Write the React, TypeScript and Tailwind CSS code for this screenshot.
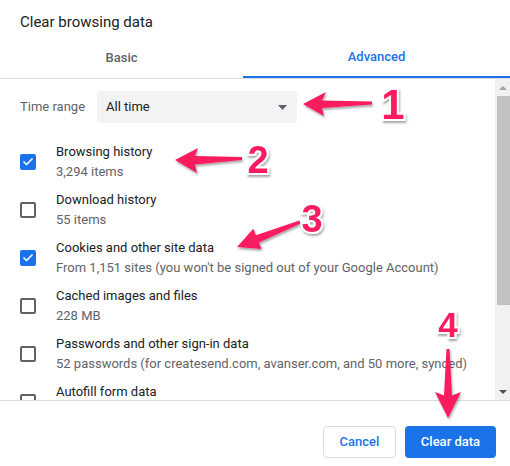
import { Check } from 'lucide-react';

const rows = [
  { label: 'Browsing history', sub: '3,294 items', checked: true },
  { label: 'Download history', sub: '55 items', checked: false },
  { label: 'Cookies and other site data', sub: "From 1,151 sites (you won't be signed out of your Google Account)", checked: true },
  { label: 'Cached images and files', sub: '228 MB', checked: false },
  { label: 'Passwords and other sign-in data', sub: '52 passwords (for createsend.com, avanser.com, and 50 more, synced)', checked: false },
  { label: 'Autofill form data', sub: '\u00a0', checked: false },
];

function Box({ checked }: { checked: boolean }) {
  if (checked) {
    return (
      <div className="w-4 h-4 shrink-0 rounded-[2px] bg-[#1a73e8] flex items-center justify-center">
        <Check className="w-3 h-3 text-white" strokeWidth={3.5} />
      </div>
    );
  }
  return <div className="w-4 h-4 shrink-0 rounded-[2px] border-2 border-[#5f6368]" />;
}

// pink callout arrows + numbers drawn over the dialog
function Callouts() {
  const pink = '#fb1a60';
  const num = {
    fill: pink,
    stroke: '#ffffff',
    strokeWidth: 4,
    paintOrder: 'stroke' as const,
    fontFamily: '"Liberation Sans", Arial, sans-serif',
    fontWeight: 700,
    textAnchor: 'middle' as const,
    filter: 'url(#sh)',
  };
  return (
    <svg className="absolute inset-0 pointer-events-none" width="510" height="466" viewBox="0 0 510 466">
      <defs>
        <filter id="sh" x="-20%" y="-20%" width="140%" height="140%">
          <feDropShadow dx="1" dy="2" stdDeviation="1.2" floodColor="#000" floodOpacity="0.35" />
        </filter>
      </defs>
      <g fill={pink} filter="url(#sh)">
        <polygon points="303,104 326,92 322,100.5 372,101.5 372,104.5 322,108 324,116" />
        <polygon points="175,160 198,148 195,156 242,157 242,160 195,164.5 197,173" />
        <polygon points="237,247 261.5,249.1 258.9,242.6 300.6,223.4 299.4,220.6 255.9,235.2 253.3,228.7" />
        <polygon points="448,418 461,392 452,395.5 449.5,349 446.5,349 444,395.5 435,392" />
      </g>
      <text x="393" y="119" fontSize="42" {...num}>1</text>
      <text x="258" y="173" fontSize="38" {...num}>2</text>
      <text x="312" y="232" fontSize="38" {...num}>3</text>
      <text x="448" y="337" fontSize="35" {...num}>4</text>
    </svg>
  );
}

export default function App() {
  return (
    <div className="relative w-[510px] h-[466px] bg-white overflow-hidden font-['Roboto',_'Liberation_Sans',_sans-serif] flex flex-col">
      <div className="h-[40px] pl-5 pt-[12px] text-[15px] leading-[20px] text-[#202124]">Clear browsing data</div>

      <div className="grid grid-cols-[243px_1fr] h-[39px] border-b border-[#dadce0]">
        <div className="flex items-center justify-center pb-[3px] text-[13px] font-medium text-[#5f6368]">Basic</div>
        <div className="flex items-center justify-center pb-[3px] text-[13px] font-medium text-[#1a73e8] border-b-2 border-[#1a73e8]">Advanced</div>
      </div>

      <div className="flex h-[321px]">
        <div className="flex-1 overflow-hidden pl-5">
          <div className="mt-[12px] h-[32px] flex items-center">
            <span className="w-[77px] text-[13px] text-[#5f6368]">Time range</span>
            <div className="w-[200px] h-[32px] rounded bg-[#f1f3f4] pl-[9px] pr-[10px] flex items-center justify-between text-[13px] text-[#202124]">
              <span>All time</span>
              <svg width="9" height="5" viewBox="0 0 9 5"><polygon points="0,0 9,0 4.5,5" fill="#5f6368" /></svg>
            </div>
          </div>

          <div className="mt-[15px]">
            {rows.map((r) => (
              <div key={r.label} className="h-[48px] flex items-center">
                <Box checked={r.checked} />
                <div className="ml-5 text-[13px] leading-[20px] whitespace-nowrap">
                  <div className="text-[#202124]">{r.label}</div>
                  <div className="text-[#5f6368]">{r.sub}</div>
                </div>
              </div>
            ))}
          </div>
        </div>

        {/* scrollbar */}
        <div className="w-[15px] bg-[#f1f1f1] flex flex-col">
          <div className="h-[17px] flex items-center justify-center">
            <svg width="8" height="4" viewBox="0 0 8 4"><polygon points="4,0 8,4 0,4" fill="#a3a3a3" /></svg>
          </div>
          <div className="h-[209px] ml-[2px] bg-[#c1c1c1]" />
          <div className="flex-1" />
          <div className="h-[17px] flex items-center justify-center">
            <svg width="8" height="4" viewBox="0 0 8 4"><polygon points="0,0 8,0 4,4" fill="#505050" /></svg>
          </div>
        </div>
      </div>

      <div className="flex-1 border-t border-[#dadce0] flex justify-end items-start pt-[25px] pr-[14px] gap-[9px]">
        <button className="w-[73px] h-[32px] rounded border border-[#dadce0] bg-white text-[13px] font-medium text-[#1a73e8]">Cancel</button>
        <button className="w-[91px] h-[32px] rounded bg-[#1a73e8] text-[13px] font-medium text-white">Clear data</button>
      </div>

      <Callouts />
    </div>
  );
}
